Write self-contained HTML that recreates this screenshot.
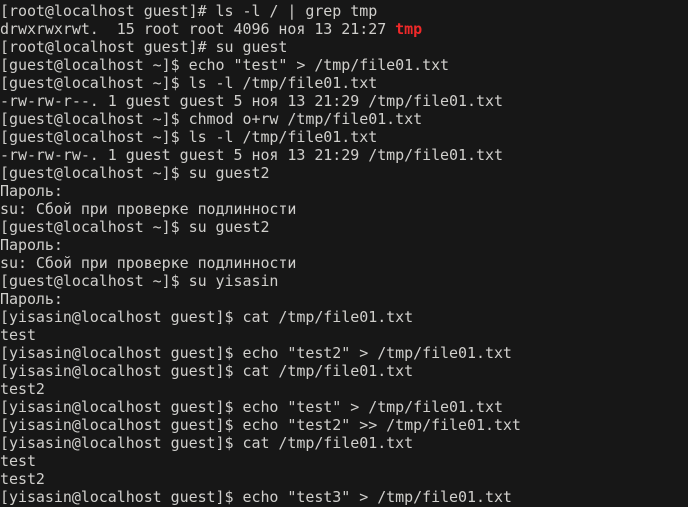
<!DOCTYPE html><html><head><style>
body{margin:0;background:#171717;width:688px;height:507px;overflow:hidden}
pre{margin:0;padding:2px 0 0 0;font-family:"DejaVu Sans Mono","Liberation Mono",monospace;font-size:15px;line-height:18px;color:#d0cfcc;letter-spacing:-0.05px}
b{color:#ef2929;font-weight:bold}
</style></head><body><pre>[root@localhost guest]# ls -l / | grep tmp
drwxrwxrwt.  15 root root 4096 ноя 13 21:27 <b>tmp</b>
[root@localhost guest]# su guest
[guest@localhost ~]$ echo "test" &gt; /tmp/file01.txt
[guest@localhost ~]$ ls -l /tmp/file01.txt
-rw-rw-r--. 1 guest guest 5 ноя 13 21:29 /tmp/file01.txt
[guest@localhost ~]$ chmod o+rw /tmp/file01.txt
[guest@localhost ~]$ ls -l /tmp/file01.txt
-rw-rw-rw-. 1 guest guest 5 ноя 13 21:29 /tmp/file01.txt
[guest@localhost ~]$ su guest2
Пароль:
su: Сбой при проверке подлинности
[guest@localhost ~]$ su guest2
Пароль:
su: Сбой при проверке подлинности
[guest@localhost ~]$ su yisasin
Пароль:
[yisasin@localhost guest]$ cat /tmp/file01.txt
test
[yisasin@localhost guest]$ echo "test2" &gt; /tmp/file01.txt
[yisasin@localhost guest]$ cat /tmp/file01.txt
test2
[yisasin@localhost guest]$ echo "test" &gt; /tmp/file01.txt
[yisasin@localhost guest]$ echo "test2" &gt;&gt; /tmp/file01.txt
[yisasin@localhost guest]$ cat /tmp/file01.txt
test
test2
[yisasin@localhost guest]$ echo "test3" &gt; /tmp/file01.txt</pre></body></html>
